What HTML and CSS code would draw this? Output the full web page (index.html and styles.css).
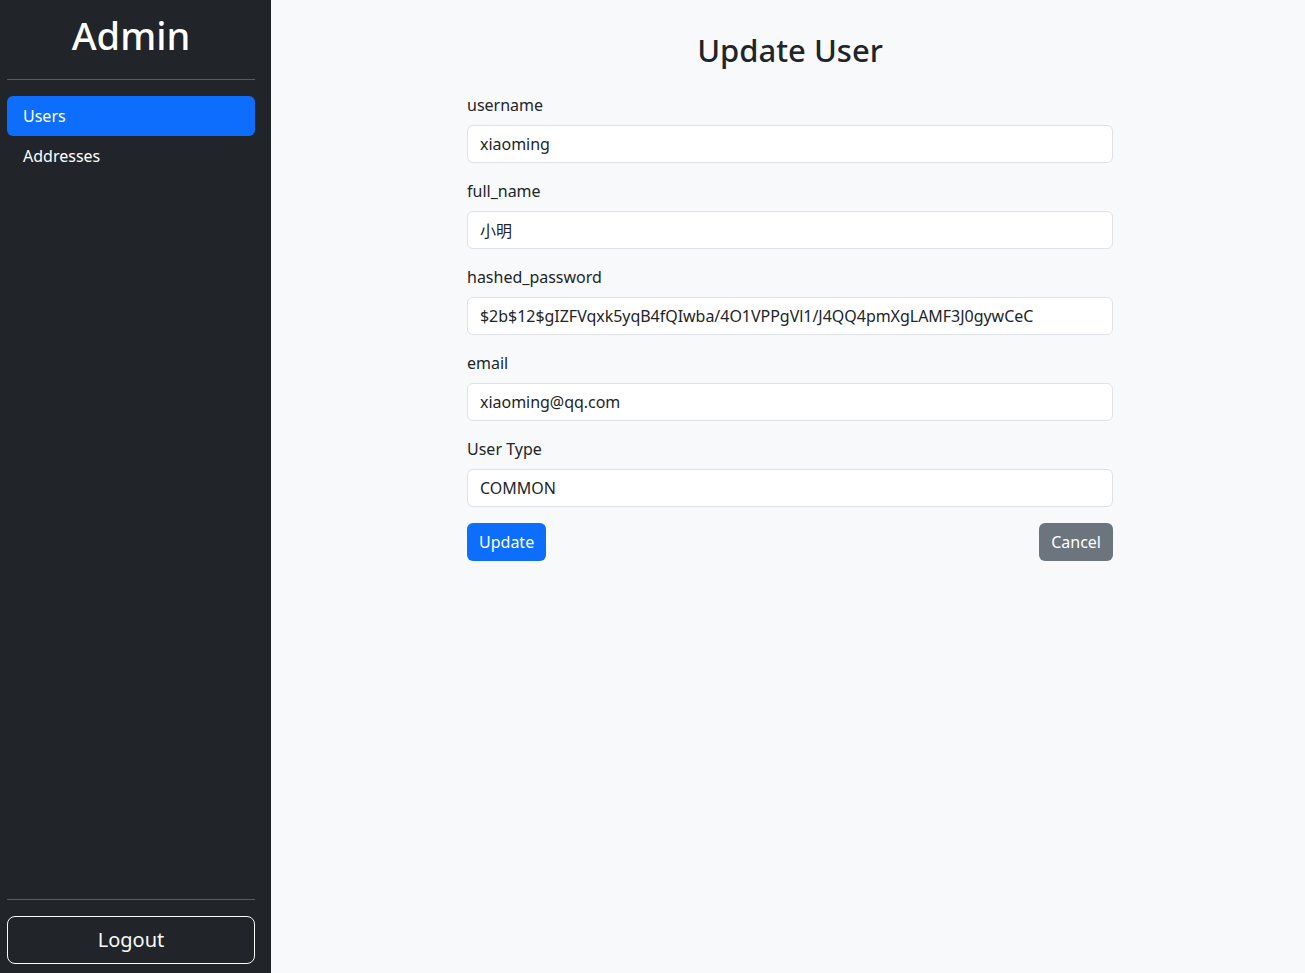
FILE: index.html
```html
<!DOCTYPE html>
<html lang="en">
<head>
<meta charset="utf-8">
<title>Update User</title>
<link rel="stylesheet" href="styles.css">
</head>
<body>
<div class="layout">
  <aside class="sidebar">
    <h1 class="brand">Admin</h1>
    <hr class="rule">
    <nav class="nav">
      <a class="nav-link active" href="#">Users</a>
      <a class="nav-link" href="#">Addresses</a>
    </nav>
    <div class="sidebar-bottom">
      <hr class="rule rule-bottom">
      <button class="logout" type="button">Logout</button>
    </div>
  </aside>
  <main class="main">
    <div class="form-wrap">
      <h2 class="title">Update User</h2>
      <form class="form">
        <div class="field">
          <label class="label">username</label>
          <input class="input" type="text" value="xiaoming">
        </div>
        <div class="field">
          <label class="label">full_name</label>
          <input class="input" type="text" value="小明">
        </div>
        <div class="field">
          <label class="label">hashed_password</label>
          <input class="input" type="text" value="$2b$12$gIZFVqxk5yqB4fQIwba/4O1VPPgVl1/J4QQ4pmXgLAMF3J0gywCeC">
        </div>
        <div class="field">
          <label class="label">email</label>
          <input class="input" type="text" value="xiaoming@qq.com">
        </div>
        <div class="field">
          <label class="label">User Type</label>
          <input class="input" type="text" value="COMMON">
        </div>
        <div class="actions">
          <button class="btn btn-primary" type="button">Update</button>
          <button class="btn btn-secondary" type="button">Cancel</button>
        </div>
      </form>
    </div>
  </main>
</div>
</body>
</html>
```
FILE: styles.css
```css
* { box-sizing: border-box; }
html, body {
  margin: 0;
  height: 100%;
}
body {
  font-family: "Noto Sans", "Noto Sans CJK SC", sans-serif;
  font-size: 16px;
  line-height: 1.5;
  color: #212529;
  background: #f8f9fa;
}
.layout {
  display: flex;
  height: 973px;
}
.sidebar {
  width: 271px;
  flex: 0 0 271px;
  background: #212529;
  color: #fff;
  display: flex;
  flex-direction: column;
  padding: 11px 16px 9px 7px;
}
.brand {
  margin: 0 0 20px;
  font-size: 38px;
  font-weight: 500;
  line-height: 48px;
  text-align: center;
}
.rule {
  border: 0;
  border-top: 1px solid #595c5f;
  margin: 0 0 16px;
}
.nav {
  display: flex;
  flex-direction: column;
}
.nav-link {
  display: block;
  height: 40px;
  padding: 8px 16px;
  color: #fff;
  text-decoration: none;
  border-radius: 6px;
}
.nav-link.active {
  background: #0d6efd;
}
.sidebar-bottom {
  margin-top: auto;
}
.logout {
  display: block;
  width: 100%;
  height: 48px;
  background: transparent;
  border: 1px solid #f8f9fa;
  border-radius: 8px;
  color: #f8f9fa;
  font-family: inherit;
  font-size: 20px;
  line-height: 30px;
}
.main {
  flex: 1;
  display: flex;
  justify-content: center;
  padding: 31px 0 0 4px;
}
.form-wrap {
  width: 646px;
}
.title {
  margin: 0 0 24px;
  font-size: 31px;
  font-weight: 500;
  line-height: 38px;
  text-align: center;
}
.field {
  margin-bottom: 16px;
}
.label {
  display: block;
  margin-bottom: 8px;
  line-height: 24px;
}
.input {
  display: block;
  width: 100%;
  height: 38px;
  padding: 6px 12px;
  font-family: inherit;
  font-size: 16px;
  line-height: 24px;
  letter-spacing: -0.03px;
  color: #212529;
  background: #fff;
  border: 1px solid #dee2e6;
  border-radius: 6px;
}
.actions {
  display: flex;
  justify-content: space-between;
}
.btn {
  height: 38px;
  padding: 6px 11px;
  font-family: inherit;
  font-size: 16px;
  line-height: 24px;
  color: #fff;
  border: 1px solid transparent;
  border-radius: 6px;
}
.btn-primary { background: #0d6efd; }
.btn-secondary { background: #6c757d; }
```
